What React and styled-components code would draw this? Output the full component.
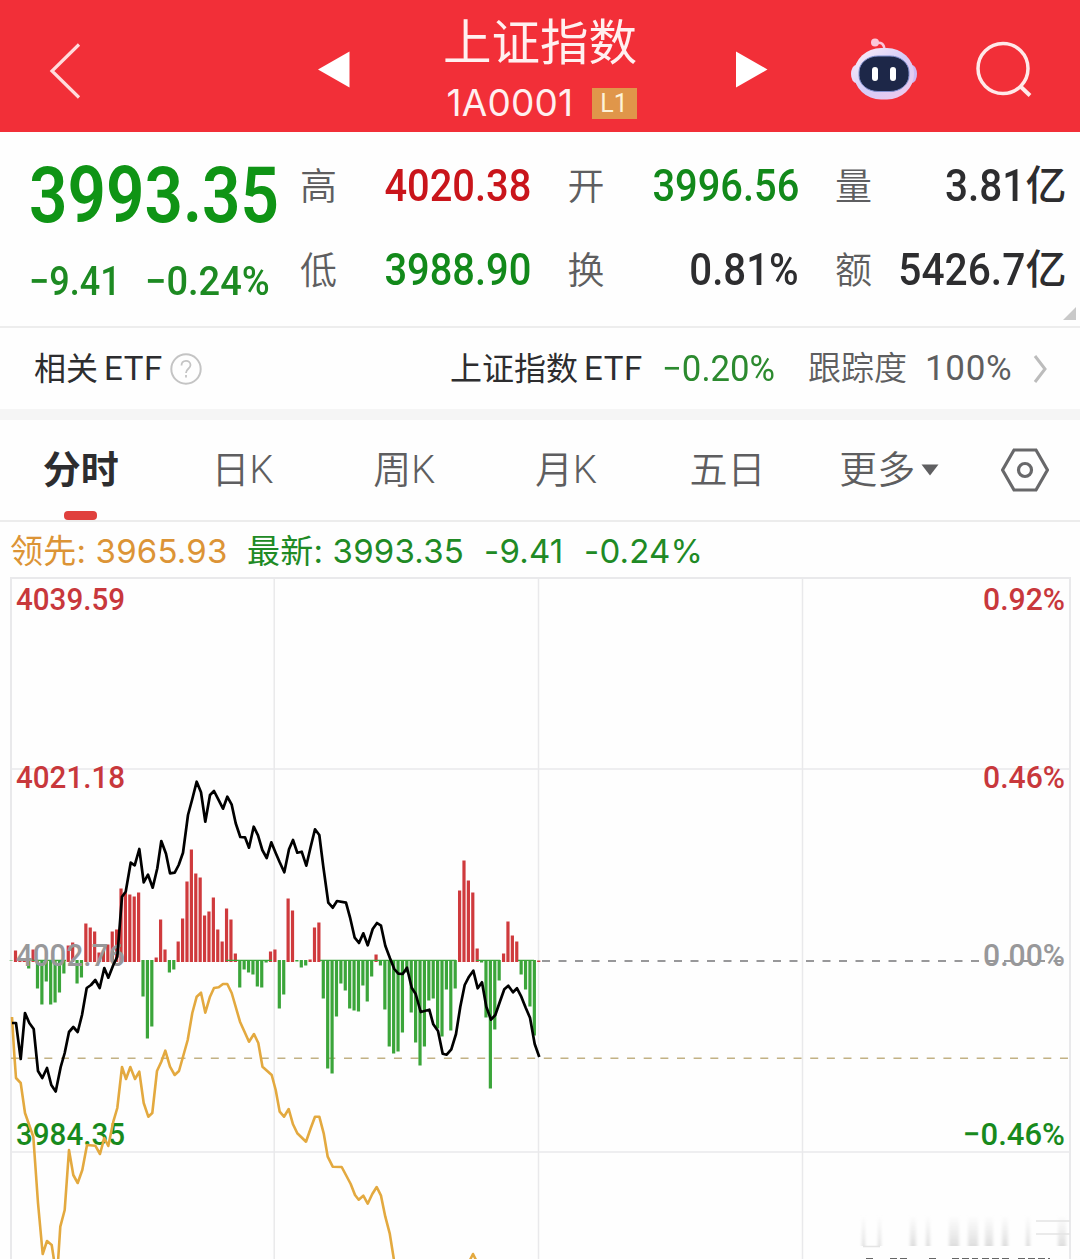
import React from 'react';
import styled, { createGlobalStyle } from 'styled-components';

const RED = '#c9151b';
const GREEN = '#12891a';
const DARK = '#2d2d2f';
const GRAY = '#5e5e60';

const GlobalStyle = createGlobalStyle`
  * {
    box-sizing: border-box;
  }

  body {
    margin: 0;
    background: #fefefe;
    font-family: Roboto, 'Noto Sans CJK SC', sans-serif;
  }
`;

const Screen = styled.main`
  width: 1080px;
  height: 1259px;
  overflow: hidden;
  display: flex;
  flex-direction: column;
  background: #fefefe;
`;

const Header = styled.header`
  flex: none;
  height: 132px;
  display: grid;
  grid-template-columns: 318px 125px 194px 212px 126px 1fr;
  align-items: center;
  background: #f22f38;
  color: #fff0f0;
`;

const BackIcon = styled.svg`
  display: block;
  margin: 9px 0 0 48px;
`;

const Arrow = styled.svg`
  display: block;
  margin-top: 6px;
  justify-self: ${({ $end }) => ($end ? 'center' : 'start')};
`;

const TitleBlock = styled.div`
  height: 132px;
  padding-top: 8px;
  display: flex;
  flex-direction: column;
  align-items: center;
`;

const Title = styled.h1`
  margin: 0;
  font-weight: 400;
  font-size: 48.5px;
  line-height: 72px;
  white-space: nowrap;
`;

const CodeRow = styled.div`
  height: 46px;
  padding-left: 3px;
  display: flex;
  align-items: center;
  gap: 12px;
`;

const Code = styled.span`
  width: 133px;
  font-family: Inter, sans-serif;
  font-size: 37px;
  line-height: 46px;
  letter-spacing: 0.2px;
`;

const Level = styled.span`
  width: 45px;
  height: 31px;
  margin-top: 1px;
  background: #e0964a;
  color: #fdf3d8;
  font-size: 25px;
  line-height: 31px;
  text-align: center;
`;

const HeaderIcon = styled.svg`
  display: block;
  margin-top: 5px;
`;

const Quote = styled.section`
  flex: none;
  height: 196px;
  display: flex;
  border-bottom: 2px solid #ededed;
  position: relative;
`;

const PriceBlock = styled.div`
  width: 300px;
  padding: 20px 0 0 29px;
`;

const Squeeze = styled.span`
  display: inline-block;
  white-space: nowrap;
  transform: scaleX(${({ $x }) => $x});
  transform-origin: ${({ $from }) => $from || 'left'} center;
`;

const Price = styled.div`
  color: #0f9415;
  font-size: 77px;
  font-weight: 600;
  line-height: 88px;
`;

const Change = styled.div`
  margin-top: 18px;
  display: flex;
  gap: 21px;
  color: #1d8a22;
  font-size: 40px;
  font-weight: 500;
  line-height: 48px;
`;

const ChangeCell = styled.div`
  width: ${({ $w }) => $w}px;
`;

const Stats = styled.div`
  width: 767px;
  padding-top: 14px;
  display: grid;
  grid-template-columns: repeat(3, 231.5px);
  grid-auto-rows: 84px;
  column-gap: 36px;
  align-content: start;
`;

const Stat = styled.div`
  display: flex;
  align-items: center;
  justify-content: space-between;
`;

const StatLabel = styled.span`
  color: ${GRAY};
  font-size: 37px;
  font-weight: 350;
  line-height: 52px;
`;

const StatValue = styled.span`
  display: flex;
  justify-content: flex-end;
  align-items: center;
  width: 160px;
  padding-bottom: 4px;
  color: ${({ $color }) => $color};
  font-size: 44px;
  font-weight: 500;
  line-height: 52px;
`;

const Unit = styled.span`
  font-size: 41px;
  line-height: 52px;
`;

const Corner = styled.svg`
  position: absolute;
  right: 4px;
  bottom: 6px;
`;

const EtfRow = styled.section`
  flex: none;
  height: 92px;
  padding: 0 30px 0 34px;
  display: flex;
  align-items: center;
  border-bottom: 11px solid #f5f5f5;
  font-size: 32px;
  line-height: 48px;
  color: ${DARK};
  white-space: nowrap;
`;

const EtfName = styled.span`
  width: ${({ $w }) => $w}px;
  margin-left: ${({ $push }) => $push || 0}px;
  word-spacing: -2px;
`;

const Latin = styled.span`
  font-size: 33px;
  letter-spacing: 0.6px;
`;

const EtfChange = styled.span`
  width: 146px;
  color: #2c8a2f;
  font-size: 36px;
`;

const Tracking = styled.span`
  color: ${GRAY};
  font-weight: 350;
  width: 117px;
  font-size: 33px;
`;

const TrackingValue = styled.span`
  color: ${GRAY};
  width: 107px;
  font-size: 35px;
  letter-spacing: 0.7px;
`;

const Tabs = styled.nav`
  flex: none;
  height: 102px;
  display: grid;
  grid-template-columns: repeat(6, 161.7px) 1fr;
  align-items: stretch;
  border-bottom: 2px solid #ececec;
`;

const Tab = styled.div`
  position: relative;
  display: flex;
  align-items: center;
  justify-content: center;
  gap: 6px;
  color: ${({ $active }) => ($active ? DARK : GRAY)};
  font-size: 38px;
  font-weight: ${({ $active }) => ($active ? 600 : 350)};
  line-height: 56px;

  &::after {
    content: '';
    display: ${({ $active }) => ($active ? 'block' : 'none')};
    position: absolute;
    bottom: 0;
    left: 64px;
    width: 33px;
    height: 9px;
    border-radius: 4px;
    background: #e0403d;
  }
`;

const Legend = styled.div`
  flex: none;
  height: 55px;
  padding: 3px 0 0 10px;
  display: flex;
  align-items: center;
  white-space: nowrap;
  font-family: Inter, 'Noto Sans CJK SC', sans-serif;
  font-size: 33px;
  line-height: 48px;
`;

const LegendItem = styled.span`
  width: ${({ $w }) => $w}px;
  color: ${({ $color }) => $color};
  letter-spacing: 0.2px;
`;

const ChartSvg = styled.svg`
  flex: none;
  display: block;
`;

const AxisLabel = styled.text`
  font-size: 31.5px;
  font-weight: 500;
  fill: ${({ $color }) => $color};
`;

const stats = [
  { label: '高', value: '4020.38', color: RED, x: 0.905 },
  { label: '开', value: '3996.56', color: GREEN, x: 0.905 },
  { label: '量', value: '3.81', unit: '亿', color: DARK, x: 0.92 },
  { label: '低', value: '3988.90', color: GREEN, x: 0.905 },
  { label: '换', value: '0.81%', color: DARK, x: 0.914 },
  { label: '额', value: '5426.7', unit: '亿', color: DARK, x: 0.925 },
];

// one bar per two minutes, pixels above (+) or below (-) the zero line
const momentum = [
  0, 11, 1, 1, -8, 12, -28, -44, -21, -44, -42, -32, -13, 16, 19, -23, -17, 38,
  34, 30, 9, 11, 17, 30, 32, 73, 69, 67, 65, 69, -36, -78, -66, 4, 42, 12, -12,
  -9, 20, 43, 80, 112, 88, 84, 46, 50, 64, 32, 20, 53, 42, 8, -27, -9, -12,
  -14, -26, -27, -2, 10, 12, -48, -34, 63, 51, -1, -7, -5, 2, 34, 39, -38,
  -108, -113, -56, -23, -30, -48, -50, -51, -25, -41, -16, 7, -5, -49, -86,
  -93, -91, -72, -12, -52, -82, -105, -86, -40, -38, -68, -76, -29, -70, -28,
  71, 101, 81, 69, 13, -2, -57, -128, -69, -20, 8, 40, 26, 20, -14, -29, -46,
  -75, 1,
];

const indexLine =
  '12,1023 16,1023 20.7,1059 25,1013 29.3,1023 33.7,1029 38,1071 42.3,1078 47,1068 51.3,1085 55.7,1091.5 60.7,1067 64.7,1053 69,1032 73.3,1027 77.7,1032 82,1015 86.7,988 91,985 95.3,980 99.7,988 104.3,968 108.3,977.7 113.3,965 117.3,956.7 122,896.7 125.7,891.7 130.7,862.7 134.7,865.3 139.3,849 143.7,882.3 148,874.7 152.7,887.7 157.3,868.3 161.3,841 166,853.7 170,873.3 174.7,872.7 178.7,865 183,852.7 188,815 192.3,799 196.7,781.7 201,792.3 205.3,821.7 210,795 214,791 218.3,799.3 223,808.7 227.3,796.7 231.7,804.7 235.7,823.3 240.3,837 245,837.3 249,847.7 253.7,826.7 258,835.3 262.3,850 266.7,858 271.3,842.3 275.7,853 279.7,862.3 284.3,872.3 289,849.3 293,840 297.3,852.7 301.7,851.7 306.3,865.7 310.7,846.7 315,829.3 319.3,835 323.3,866.7 328.3,902.7 332.7,907.7 337,901 346,902.7 350,917.3 354.7,937.7 359,943 363.3,933.3 367.7,945.3 372.7,929 377,923 381,925.7 385.3,945.7 390,958.3 394.3,969 398.3,973.7 402.7,974 407,967.7 411.7,987.7 415.7,994 420.7,1012 429.3,1009.7 433.3,1024.3 438,1031 442.7,1053.7 446.7,1054.7 451.3,1049.3 456,1034 460.3,1006.7 464.7,985 469,976.7 473.3,970.7 477.7,988.3 482,982.3 486.3,1006.7 491,1019.7 495.3,1015 499.7,1002.3 504.3,989.3 508.3,985.7 513,992.3 517,988.3 521.3,996.7 525.7,1007.7 530,1017.7 534.7,1044 539.3,1057';

const leadLine =
  '12,1017 14,1050 16,1078 20.7,1083 25,1113 33.3,1136.7 38,1203 42.7,1254 47,1241 51.7,1245 54.3,1262 58,1262 60.3,1226.7 64.7,1210 69,1150 73.3,1175 77.7,1183 82.3,1170 87,1145 95.3,1145.7 100,1154 104.3,1138 108.3,1146 113.3,1121.7 117.3,1108 122,1067 126,1079 130.3,1067 135,1079 139.3,1071.7 143.7,1103 148.3,1116.7 152.3,1113 157,1071 161.3,1061.7 165.3,1050.7 170,1066.7 174.7,1075 179,1071 187.7,1040 192.3,1013 196.7,996.7 201,992.7 205.3,1012.7 210,996.7 214,988 218.7,987.3 223,984 227.3,984 231.7,993 240,1021.7 249,1041.7 254,1034 258.3,1043 262.5,1066.7 271.7,1075 275.7,1090 279.7,1111.7 284,1116.7 288.7,1109 293,1124.3 297.3,1133.3 306,1141.7 310.7,1128.3 315,1116.7 319.3,1116.7 323.7,1133.3 327.7,1156.7 332.7,1166.7 341.7,1167 350.7,1184 355,1195 358.7,1199.7 363.3,1195.7 367.7,1203.7 372.3,1194 376.7,1187 381,1195.7 385.3,1216.7 389.7,1233.3 394.3,1262 469,1262 473,1254 477,1262';

const axis = [
  { y: 609.5, left: '4039.59', right: '0.92%', w: 82, color: '#c8383c' },
  { y: 787.5, left: '4021.18', right: '0.46%', w: 82, color: '#c8383c' },
  { y: 966, left: '4002.76', right: '0.00%', w: 82, color: '#98989a' },
  { y: 1144.5, left: '3984.35', right: '−0.46%', w: 102, color: '#188a1d' },
];

const fadedStrokes = [
  [862, 3], [878, 3], [910, 6], [926, 4], [949, 10], [968, 10], [985, 8],
  [1002, 6], [1026, 4], [1058, 8],
];

const Robot = () => (
  <HeaderIcon width="70" height="64" viewBox="849 36 70 64">
    <defs>
      <linearGradient id="shell" x1="0" y1="0" x2="1" y2="1">
        <stop offset="0" stopColor="#fff0f8" />
        <stop offset="0.5" stopColor="#d5cdf8" />
        <stop offset="1" stopColor="#f3c9ea" />
      </linearGradient>
    </defs>
    <path d="M876 42q8-2 8.500 7" fill="none" stroke="#f9c6dc" strokeWidth="2.500" />
    <circle cx="875" cy="41.500" r="4" fill="#fbc8da" />
    <ellipse cx="856" cy="73" rx="5" ry="9" fill="#eadcfb" />
    <ellipse cx="912" cy="73" rx="5" ry="9" fill="#cdb9f3" />
    <rect x="854" y="47" width="60" height="51.500" rx="27" ry="25.500" fill="url(#shell)" />
    <rect x="859" y="55" width="50" height="35.500" rx="19" ry="16" fill="#1d2748" stroke="#7f8fce" />
    <rect x="872" y="66" width="6" height="14" rx="3" fill="#fff" />
    <rect x="890" y="66" width="6" height="14" rx="3" fill="#fff" />
  </HeaderIcon>
);

const TopBar = () => (
  <Header>
    <BackIcon width="36" height="60" viewBox="0 0 36 60">
      <path d="M31 3.500 4 30l27 26.500" fill="none" stroke="#ffdcdc" strokeWidth="3.200" />
    </BackIcon>
    <Arrow width="32" height="37" viewBox="0 0 32 37">
      <path d="M0 18.500 31.500 0.500v36z" fill="#fff" />
    </Arrow>
    <TitleBlock>
      <Title>上证指数</Title>
      <CodeRow>
        <Code>1A0001</Code>
        <Level>L1</Level>
      </CodeRow>
    </TitleBlock>
    <Arrow $end width="32" height="37" viewBox="-9 0 32 37" overflow="visible">
      <path d="M0 0.500 31.500 18.500 0 36.500z" fill="#fff" />
    </Arrow>
    <Robot />
    <HeaderIcon width="58" height="60" viewBox="974 40 58 60">
      <circle cx="1002" cy="69.500" r="25" fill="none" stroke="#ffe9e9" strokeWidth="3.500" />
      <path d="M1019.500 87.500 1029 96.500" stroke="#ffe9e9" strokeWidth="4" />
    </HeaderIcon>
  </Header>
);

const QuotePanel = () => (
  <Quote>
    <PriceBlock>
      <Price>
        <Squeeze $x={0.875}>3993.35</Squeeze>
      </Price>
      <Change>
        <ChangeCell $w={95}>
          <Squeeze $x={0.9}>−9.41</Squeeze>
        </ChangeCell>
        <ChangeCell $w={124}>
          <Squeeze $x={0.95}>−0.24%</Squeeze>
        </ChangeCell>
      </Change>
    </PriceBlock>
    <Stats>
      {stats.map(({ label, value, unit, color, x }) => (
        <Stat key={label}>
          <StatLabel>{label}</StatLabel>
          <StatValue $color={color}>
            <Squeeze $x={x} $from="right">
              {value}
            </Squeeze>
            {unit && <Unit>{unit}</Unit>}
          </StatValue>
        </Stat>
      ))}
    </Stats>
    <Corner width="13" height="13" viewBox="0 0 13 13">
      <path d="M13 0v13H0z" fill="#c9c9c9" />
    </Corner>
  </Quote>
);

const EtfPanel = () => (
  <EtfRow>
    <EtfName $w={136}>
      相关 <Latin>ETF</Latin>
    </EtfName>
    <svg width="32" height="32" viewBox="0 0 32 32" fill="none" stroke="#c4c4c4">
      <circle cx="16" cy="16" r="14.700" strokeWidth="2" />
      <path d="M11.500 12.500c0-6 9-6 9-0.500 0 4-4.500 3.500-4.500 8M16 22v2.500" strokeWidth="1.800" />
    </svg>
    <EtfName $w={212} $push={248}>
      上证指数 <Latin>ETF</Latin>
    </EtfName>
    <EtfChange>
      <Squeeze $x={0.965}>−0.20%</Squeeze>
    </EtfChange>
    <Tracking>跟踪度</Tracking>
    <TrackingValue>100%</TrackingValue>
    <svg width="18" height="30" viewBox="0 0 18 30">
      <path d="M3 2l10 13L3 28" fill="none" stroke="#bcbcbc" strokeWidth="3" />
    </svg>
  </EtfRow>
);

const TabBar = () => (
  <Tabs>
    <Tab $active>分时</Tab>
    <Tab>日K</Tab>
    <Tab>周K</Tab>
    <Tab>月K</Tab>
    <Tab>五日</Tab>
    <Tab>
      更多
      <svg width="18" height="12" viewBox="0 0 18 12">
        <path d="M0.500 0.500h17L9 11.500z" fill="#5f5f61" />
      </svg>
    </Tab>
    <Tab>
      <svg width="48" height="44" viewBox="0 0 48 44" fill="none" stroke="#68686a" strokeWidth="3.200">
        <path d="M13 2h22l11.500 20L35 42H13L1.500 22z" />
        <circle cx="24" cy="22" r="6.500" />
      </svg>
    </Tab>
  </Tabs>
);

const Chart = () => (
  <ChartSvg width="1080" height="682" viewBox="0 577 1080 682">
    <g fill="none" stroke="#e9e9eb" strokeWidth="1.500">
      <path d="M11 1259V578H1070V1259" strokeWidth="2" />
      <path d="M274.200 578V1259M538.500 578V1259M802.500 578V1259" />
      <path d="M11 769H1070M11 1152H1070" />
    </g>
    <path d="M542 961H1070" stroke="#77777a" strokeWidth="1.300" strokeDasharray="8 8.500" />
    <path d="M11 1058.300H1070" stroke="#c2b184" strokeWidth="1.400" strokeDasharray="8 8.650" />
    {momentum.map((v, i) => (
      <rect
        key={i}
        x={9.5 + i * 4.397}
        y={v > 0 ? 961.5 - v : 960}
        width="3.2"
        height={Math.abs(v) + 0.5}
        fill={v > 0 ? '#cf3a3d' : '#3ba53a'}
      />
    ))}
    <path d="M226 960.300H272M320 960.300H456M476 960.300H500M518 960.300H534M28 960.300H66" stroke="#3ba53a" strokeWidth="1.200" />
    {axis.map(({ y, left, right, w, color }) => (
      <React.Fragment key={y}>
        <AxisLabel x="16" y={y} textLength="109" lengthAdjust="spacingAndGlyphs" $color={color}>
          {left}
        </AxisLabel>
        <AxisLabel x={1065 - w} y={y} textLength={w} lengthAdjust="spacingAndGlyphs" $color={color}>
          {right}
        </AxisLabel>
      </React.Fragment>
    ))}
    <polyline points={leadLine} fill="none" stroke="#e3a93f" strokeWidth="2.600" strokeLinejoin="round" />
    <polyline points={indexLine} fill="none" stroke="#000" strokeWidth="2.700" strokeLinejoin="round" />
    <linearGradient id="fade" x1="0" y1="0" x2="0" y2="1">
      <stop offset="0" stopColor="#e4e4e4" stopOpacity="0" />
      <stop offset="1" stopColor="#dedede" />
    </linearGradient>
    <filter id="haze">
      <feGaussianBlur stdDeviation="1.4 0.3" />
    </filter>
    <g fill="url(#fade)" filter="url(#haze)">
      {fadedStrokes.map(([x, w]) => (
        <rect key={x} x={x} y="1215" width={w} height="31" />
      ))}
    </g>
    <path d="M863 1246.500h17M1036 1221h34M1036 1234h34" stroke="#e4e4e4" strokeWidth="1.500" />
    <path d="M866 1258.500h8M890 1258.500h20M929 1258.500h8M952 1258.500h26M982 1258.500h30M1018 1258.500h32" stroke="#666" strokeWidth="1" strokeDasharray="7 3" />
  </ChartSvg>
);

const App = () => (
  <>
    <GlobalStyle />
    <Screen>
      <TopBar />
      <QuotePanel />
      <EtfPanel />
      <TabBar />
      <Legend>
        <LegendItem $w={237} $color="#dc9436">领先: 3965.93</LegendItem>
        <LegendItem $w={237} $color="#208a25">最新: 3993.35</LegendItem>
        <LegendItem $w={100} $color="#208a25">-9.41</LegendItem>
        <LegendItem $w={120} $color="#208a25">-0.24%</LegendItem>
      </Legend>
      <Chart />
    </Screen>
  </>
);

export default App;
